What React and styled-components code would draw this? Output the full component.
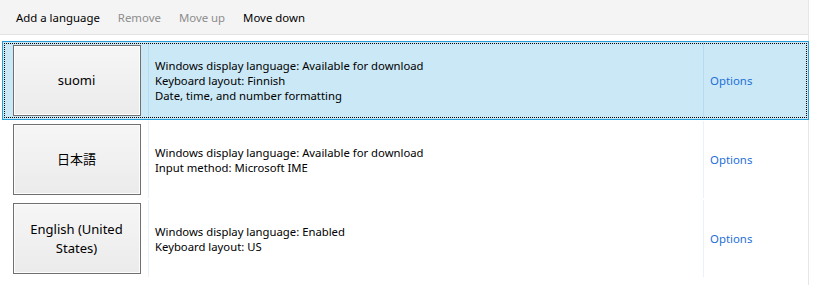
import React from 'react';
import styled, { createGlobalStyle } from 'styled-components';

const GlobalStyle = createGlobalStyle`
    body {
        margin: 0;
        background: #ffffff;
        font-family: "Segoe UI", "Noto Sans", "Open Sans", sans-serif;
    }
`;

const Page = styled.div`
    width: 809px;
    height: 285px;
    border-right: 1px solid #e6e6e6;
    box-sizing: border-box;
`;

const Toolbar = styled.div`
    height: 35px;
    background-color: #f4f4f4;
    border-bottom: 1px solid #e3e3e3;
    display: flex;
    align-items: center;
    padding-left: 16px;
    gap: 18px;
    box-sizing: border-box;
`;

const ToolButton = styled.div`
    font-size: 11.4px;
    color: ${({ disabled }) => (disabled ? '#8d8d8d' : '#000000')};
    cursor: default;
`;

const List = styled.div`
    margin: 6px 0 0 2px;
    width: 807px;
`;

const Row = styled.div`
    position: relative;
    height: 79px;
    display: grid;
    grid-template-columns: 146px 1fr 105px;
    box-sizing: border-box;
    background-color: ${({ selected }) => (selected ? '#cbe8f6' : 'transparent')};
    border: 1px solid ${({ selected }) => (selected ? '#26a0da' : 'transparent')};

    &::after {
        content: '';
        display: ${({ selected }) => (selected ? 'block' : 'none')};
        position: absolute;
        inset: 1px;
        border: 1px dotted #000;
        pointer-events: none;
    }
`;

const ButtonCell = styled.div`
    display: flex;
    align-items: center;
    justify-content: center;
    padding-left: 2px;
    border-right: 1px solid ${({ selected }) => (selected ? '#b5dcf3' : '#e9f1fb')};
`;

const LangButton = styled.div`
    width: 128px;
    height: 71px;
    box-sizing: border-box;
    border: 1px solid #707070;
    box-shadow: inset 0 0 0 1px #fcfcfc;
    background: linear-gradient(#f6f6f6, #ebebeb);
    display: flex;
    align-items: center;
    justify-content: center;
    text-align: center;
    font-size: 13px;
    line-height: 19px;
    color: #000;
    padding: 0 10px;
    font-family: "Segoe UI", "Noto Sans", "Noto Sans CJK JP", sans-serif;
`;

const Details = styled.div`
    display: flex;
    flex-direction: column;
    justify-content: center;
    padding-left: 6px;
    font-size: 11.3px;
    line-height: 15px;
    color: #000;
`;

const OptionsCell = styled.div`
    display: flex;
    align-items: center;
    padding-left: 6px;
    border-left: 1px solid ${({ selected }) => (selected ? '#b5dcf3' : '#e9f1fb')};
    font-size: 11.4px;
    color: #1e6fd6;
`;

const languages = [
    {
        name: 'suomi',
        lines: [
            'Windows display language: Available for download',
            'Keyboard layout: Finnish',
            'Date, time, and number formatting',
        ],
        selected: true,
    },
    {
        name: '日本語',
        lines: [
            'Windows display language: Available for download',
            'Input method: Microsoft IME',
        ],
    },
    {
        name: 'English (United States)',
        lines: [
            'Windows display language: Enabled',
            'Keyboard layout: US',
        ],
    },
];

const App = () => {
    return (
        <>
            <GlobalStyle />
            <Page>
                <Toolbar>
                    <ToolButton>Add a language</ToolButton>
                    <ToolButton disabled>Remove</ToolButton>
                    <ToolButton disabled>Move up</ToolButton>
                    <ToolButton>Move down</ToolButton>
                </Toolbar>
                <List>
                    {languages.map((lang) => (
                        <Row key={lang.name} selected={lang.selected}>
                            <ButtonCell selected={lang.selected}>
                                <LangButton>{lang.name}</LangButton>
                            </ButtonCell>
                            <Details>
                                {lang.lines.map((line) => (
                                    <div key={line}>{line}</div>
                                ))}
                            </Details>
                            <OptionsCell selected={lang.selected}>Options</OptionsCell>
                        </Row>
                    ))}
                </List>
            </Page>
        </>
    );
};

export default App;
